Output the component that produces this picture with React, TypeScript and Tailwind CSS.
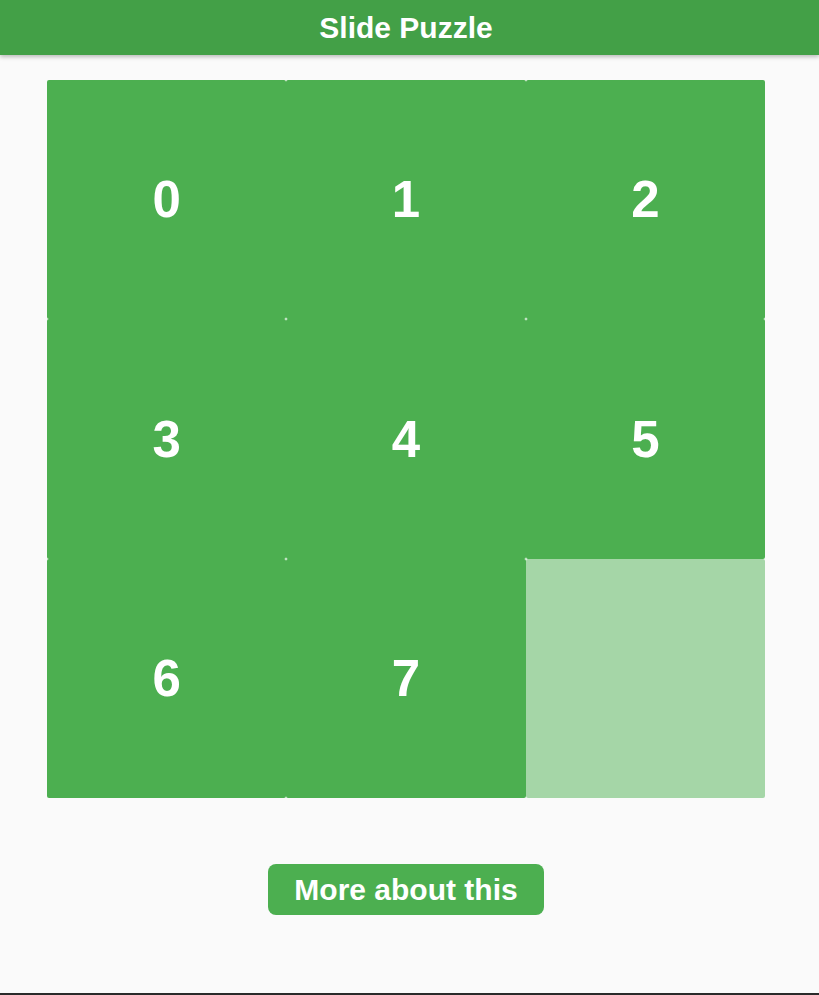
const TILES = [0, 1, 2, 3, 4, 5, 6, 7, null] as const;

export default function App() {
  return (
    <div className="flex h-[995px] flex-col bg-[#fafafa] font-['Liberation_Sans',Arial,sans-serif]">
      <header className="relative z-10 flex h-[55px] items-center justify-center bg-[#43a047] pr-[7px] shadow-[0_2px_4px_rgba(0,0,0,0.25)]">
        <h1 className="text-[30px] font-bold text-white">Slide Puzzle</h1>
      </header>

      <main className="flex flex-1 flex-col items-center pr-[7px]">
        <div className="mt-[25px] grid h-[718px] w-[718px] grid-cols-3 grid-rows-3">
          {TILES.map((tile, i) =>
            tile === null ? (
              <div key={i} className="rounded-[2px] bg-[#a5d6a7]" />
            ) : (
              <div
                key={i}
                className="flex items-center justify-center rounded-[2px] bg-[#4caf50] pt-[2px] text-[51px] font-bold text-white"
              >
                {tile}
              </div>
            )
          )}
        </div>

        <button className="mt-[66px] h-[51px] w-[276px] rounded-[8px] bg-[#4caf50] text-[30px] font-bold text-white">
          More about this
        </button>
      </main>

      <div className="h-[2px] bg-[#2a2a2a]" />
    </div>
  );
}
